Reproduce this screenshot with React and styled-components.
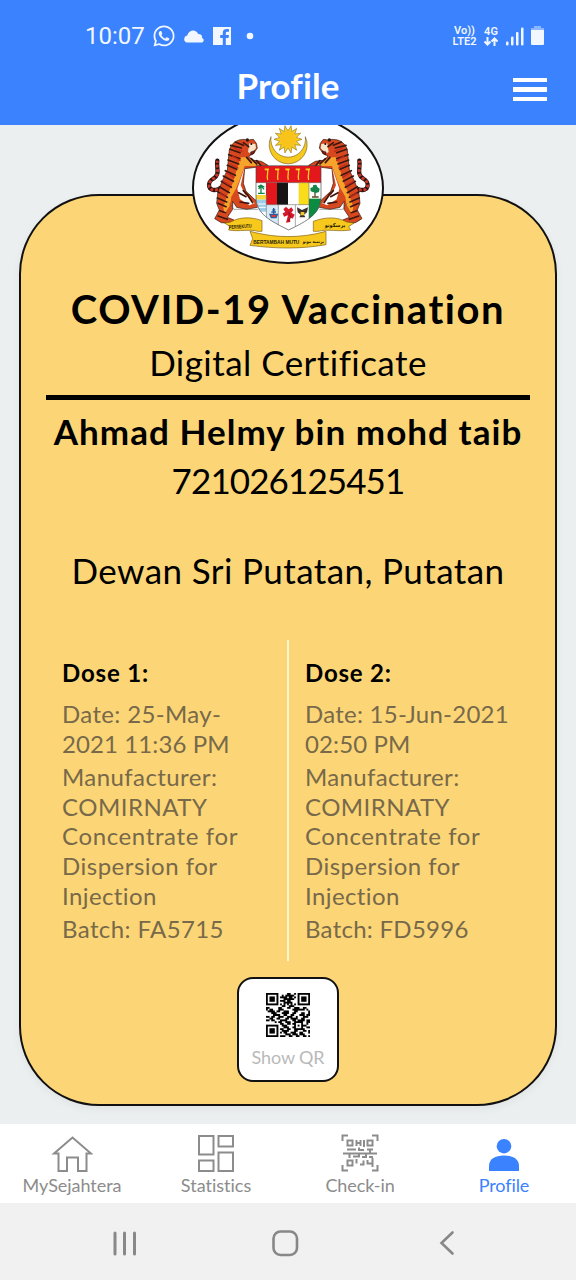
import React from "react";
import styled, { createGlobalStyle } from "styled-components";
import { FaWhatsapp } from "react-icons/fa";

const GlobalStyle = createGlobalStyle`
  * { box-sizing: border-box; }
  body { margin: 0; background: #ebefef; }
`;

const Screen = styled.div`
  width: 576px;
  height: 1280px;
  display: flex;
  flex-direction: column;
  overflow: hidden;
  background: #ebeff0;
  font-family: Lato, "Liberation Sans", sans-serif;
  font-variant-ligatures: none;
  color: #000;
`;

const Header = styled.header`
  height: 125px;
  flex: none;
  background: #3a82fe;
  color: #fff;
`;

const StatusBar = styled.div`
  height: 56px;
  padding: 16px 32px 0 85px;
  display: flex;
  align-items: center;
  justify-content: space-between;
  color: #f2f7ff;
`;

const StatusGroup = styled.div`
  display: flex;
  align-items: center;
  gap: ${(p) => p.$gap}px;
`;

const Clock = styled.span`
  font: 400 24px/40px Roboto, sans-serif;
`;

const Network = styled.span`
  display: flex;
  flex-direction: column;
  align-items: center;
  font: 600 11px/11px Roboto, sans-serif;
`;

const TitleRow = styled.div`
  height: 69px;
  padding: 0 29px 0 63px;
  display: grid;
  grid-template-columns: 1fr 34px;
  align-items: start;
`;

const PageTitle = styled.h1`
  margin: 7px 0 0;
  font-size: 35px;
  line-height: 44px;
  font-weight: 700;
  text-align: center;
  letter-spacing: 0.1px;
`;

const MenuButton = styled.button`
  margin-top: 22px;
  padding: 0;
  border: 0;
  background: none;
  width: 34px;
  display: flex;
  flex-direction: column;
  gap: 5px;
  span { height: 4.4px; background: #fff; }
`;

const Main = styled.main`
  flex: 1;
  overflow: hidden;
  padding: 69px 19px 0;
`;

const Card = styled.section`
  height: 912px;
  border: 2px solid #111;
  border-radius: 80px;
  background: #fcd676;
  display: flex;
  flex-direction: column;
  align-items: center;
  box-shadow: 0 3px 8px rgba(0, 0, 0, 0.05);
`;

const Seal = styled.div`
  flex: none;
  width: 192px;
  height: 152px;
  margin-top: -84px;
  border: 2px solid #111;
  border-radius: 50%;
  background: #fff;
  overflow: hidden;
  svg { display: block; margin: -2px; }
`;

const Line = styled.div`
  flex: none;
  white-space: nowrap;
  font-size: ${(p) => p.$size}px;
  font-weight: ${(p) => (p.$bold ? 700 : 400)};
  line-height: ${(p) => p.$height}px;
  letter-spacing: ${(p) => p.$track || 0}px;
  margin-top: ${(p) => p.$top || 0}px;
`;

const Rule = styled.hr`
  flex: none;
  width: 484px;
  height: 5px;
  margin: 11px 0 0;
  border: 0;
  background: #000;
`;

const Doses = styled.div`
  flex: none;
  width: 484px;
  height: 321px;
  margin-top: 48px;
  display: grid;
  grid-template-columns: 242px 242px;
`;

const Dose = styled.div`
  padding: 18px 0 0 16px;
  border-left: ${(p) => (p.$divided ? "2px solid #fff3d0" : "0")};
  margin-left: ${(p) => (p.$divided ? "-1px" : "0")};
  color: #77694a;
`;

const DoseTitle = styled(Line)`
  color: #000;
  margin-bottom: 11px;
`;

const QrButton = styled.button`
  flex: none;
  width: 102px;
  height: 105px;
  margin-top: 16px;
  padding: 14px 0 0;
  border: 2px solid #111;
  border-radius: 16px;
  background: #fff;
  color: #b9b9b9;
  font-family: inherit;
  display: flex;
  flex-direction: column;
  align-items: center;
`;

const TabBar = styled.nav`
  flex: none;
  height: 79px;
  background: #fff;
  display: grid;
  grid-template-columns: repeat(4, 1fr);
`;

const Tab = styled.div`
  display: flex;
  flex-direction: column;
  align-items: center;
  padding-top: 9px;
  color: ${(p) => (p.$active ? "#3a82fe" : "#8c8c8c")};
`;

const SystemNav = styled.footer`
  flex: none;
  height: 77px;
  background: #f1f1f1;
  padding: 2px 121px 0 112px;
  display: grid;
  grid-template-columns: 159px 1fr auto;
  align-items: center;
  color: #888;
`;

function Tiger() {
  return (
    <g>
      <path d="M84 208C52 218 50 186 70 176C92 162 78 146 82 122" fill="none" stroke="#25120c" strokeWidth="13" strokeLinecap="round" />
      <path d="M84 208C52 218 50 186 70 176C92 162 78 146 82 122" fill="none" stroke="#c8352a" strokeWidth="9" strokeDasharray="9 5" />
      <path d="M118 90C126 62 152 54 176 60L190 58L199 70L202 84L190 102L176 108L186 120L214 124L234 136L226 150L196 142L164 146L160 190L168 214L196 240L206 232L218 242L202 262L170 268L140 262L128 244L128 268L112 292L132 300L126 310L94 308L74 296L88 270L80 250L84 214L100 176L112 150Z" fill="#d8481f" stroke="#2a140c" strokeWidth="2" />
      <path d="M152 112L172 112L196 130L214 134L196 138L164 138L148 182L138 206L124 230L120 256L104 282L100 262L112 226L128 190L140 150Z" fill="#f6a32c" />
      <path d="M164 142L152 196L164 222L194 250L178 256L150 238L142 206Z" fill="#fff" />
      <path d="M178 70L196 72L198 84L184 102L174 96Z" fill="#f7e6cc" />
      <path d="M120 88L150 98M122 76L154 84M136 66L160 76M116 104L150 116M114 120L146 132M112 136L140 148M106 152L136 166M100 168L130 184M94 184L124 202M88 200L118 218M84 216L112 232M82 234L110 246M84 250L108 260M90 272L106 278M84 288L112 298M160 68L176 80M170 112L184 128M184 116L200 132M200 122L214 138M146 218L168 230M150 246L176 250M160 212L174 226M176 230L188 248" stroke="#3a1710" strokeWidth="5" strokeLinecap="round" />
      <path d="M132 84L156 94M128 108L150 122M120 132L144 144M110 158L132 172M100 184L120 196M90 220L108 230" stroke="#bf2a1c" strokeWidth="4" strokeLinecap="round" />
      <circle cx="184" cy="72" r="3" fill="#111" />
      <path d="M182 96L194 92L192 100L182 104Z" fill="#8c1b14" stroke="#111" strokeWidth="1.5" />
      <circle cx="172" cy="60" r="5" fill="#2a140c" />
    </g>
  );
}

function CoatOfArms() {
  const rays = Array.from({ length: 28 }, (_, i) => {
    const a = (i * Math.PI) / 14;
    const r = i % 2 ? 26 : 42;
    return `${294 + r * Math.cos(a)},${58 + r * Math.sin(a)}`;
  }).join(" ");
  return (
    <svg width="192" height="152" viewBox="6 -24 576 456">
      <path d="M243 50A57 57 0 1 0 346 50A52 54 0 1 1 243 50Z" fill="#f6c91c" stroke="#54400c" strokeWidth="1.5" />
      <polygon points={rays} fill="#f8cf20" stroke="#7b5a10" strokeWidth="1.5" />
      <circle cx="294" cy="58" r="25" fill="#f8c31b" />
      <Tiger />
      <g transform="translate(590 0) scale(-1 1)"><Tiger /></g>
      <path d="M118 250L132 268H205M472 250L458 268H388" fill="none" stroke="#555" strokeWidth="1.5" />
      <clipPath id="shield"><path d="M198 137H393V230C393 282 352 302 296 330C240 302 198 282 198 230Z" /></clipPath>
      <g clipPath="url(#shield)">
        <rect x="198" y="137" width="195" height="200" fill="#fff" />
        <rect x="198" y="137" width="195" height="51" fill="#e4181c" />
        <rect x="228" y="188" width="33" height="66" fill="#e4181c" />
        <rect x="261" y="188" width="33" height="66" fill="#161414" />
        <rect x="326" y="188" width="31" height="66" fill="#f9dc1a" />
        <rect x="198" y="225" width="31" height="14" fill="#f9d43a" />
        <rect x="198" y="239" width="31" height="36" fill="#9ccdea" />
        <path d="M198 252H229M198 262H229" stroke="#fff" strokeWidth="3" />
        <rect x="357" y="236" width="36" height="80" fill="#0c8b43" />
        <rect x="229" y="255" width="36" height="70" fill="#d7ebf6" />
        <path d="M229 188V330M357 188V330M265 254V330M316 254V330M198 188H393M229 254H357" stroke="#555" strokeWidth="1.5" />
      </g>
      <path d="M198 137H393V230C393 282 352 302 296 330C240 302 198 282 198 230Z" fill="none" stroke="#444" strokeWidth="2" />
      {[232, 263, 294, 325, 355].map((x) => (
        <g key={x} stroke="#f8cf20" fill="none">
          <path d={`M${x} 149C${x + 5} 158 ${x - 4} 166 ${x + 1} 180`} strokeWidth="4" />
          <path d={`M${x - 8} 148H${x + 5}`} strokeWidth="5" />
        </g>
      ))}
      <path d="M213 197V218M204 200L213 196L223 201M206 207L213 197L222 208M204 220H224" stroke="#14864a" strokeWidth="4" fill="none" />
      <path d="M375 210V231M366 231H386" stroke="#5d4d22" strokeWidth="4" />
      <path d="M362 214L361 204L368 202L370 195L379 194L382 201L389 206L387 216L378 219Z" fill="#14864a" />
      <path d="M240 283H262L258 293H244ZM244 276H258M247 270H256M251 264V284" stroke="#295c9e" strokeWidth="4" fill="#d53d3d" />
      <path d="M294 286L282 290L278 280L286 276L280 268L288 260L296 268L304 262L310 270L304 278L314 284L308 296L300 292L301 306L288 308Z" fill="#d6182c" />
      <path d="M296 276L302 292L294 304" stroke="#8b1020" strokeWidth="3" fill="none" />
      <path d="M336 270L321 262L323 277L332 284L328 292H346L342 284L351 277L354 262Z" fill="#39302a" />
      <path d="M332 276H343V286H332Z" fill="#f3c82c" />
      <path d="M104 309L122 306C150 290 184 290 216 302V334H204C178 326 150 336 116 330L120 320ZM492 309L470 306C442 290 408 290 370 304V334H384C414 326 442 336 482 330L476 320Z" fill="#f8c91d" stroke="#7d5d10" strokeWidth="2" />
      <path d="M180 334C254 354 330 356 408 334V374C330 388 254 386 180 376L188 356Z" fill="#f8c91d" stroke="#7d5d10" strokeWidth="2" />
      <g fill="#281c06" fontFamily="Liberation Sans, sans-serif" fontWeight="700">
        <text x="190" y="372" fontSize="16" textLength="138" lengthAdjust="spacingAndGlyphs">BERTAMBAH MUTU</text>
        <text x="117" y="325" fontSize="16" textLength="68" lengthAdjust="spacingAndGlyphs" transform="rotate(-3 150 320)">PERSEKUTU</text>
        <text x="338" y="368" fontSize="14" fontFamily="DejaVu Sans, sans-serif" textLength="64" lengthAdjust="spacingAndGlyphs" direction="ltr">برتمبه موتو</text>
        <text x="404" y="321" fontSize="16" fontFamily="DejaVu Sans, sans-serif" textLength="62" lengthAdjust="spacingAndGlyphs">برسکوتو</text>
      </g>
    </svg>
  );
}

const QR_ROWS = [
  "1111111000001100101111111",
  "1000001001011111001000001",
  "1011101011110110101011101",
  "1011101000111111001011101",
  "1011101011101100001011101",
  "1000001000111110001000001",
  "1111111010101010101111111",
  "0000000001100111000000000",
  "1100000110001100111001100",
  "1011000111000001111111010",
  "0111101100111000110000001",
  "0001110001111001100011001",
  "0000111100110011000111011",
  "1101100111001110010001110",
  "0011001100011011110011000",
  "1101100011110001101111011",
  "0000010110011100111110011",
  "0000000011001101100010010",
  "1111111001110000101011100",
  "1000001000111001100010011",
  "1011101011001100111111000",
  "1011101001111000110001101",
  "1011101010110011100110001",
  "1000001000011101110111000",
  "1111111011100110011001101",
];

function QrCode() {
  const d = QR_ROWS.flatMap((row, y) =>
    [...row].map((c, x) => (c === "1" ? `M${x} ${y}h1v1h-1z` : ""))
  ).join("");
  return (
    <svg width="44" height="44" viewBox="0 0 25 25">
      <path d={d} fill="#000" stroke="#000" strokeWidth="0.06" />
    </svg>
  );
}

const CloudIcon = () => (
  <svg width="22" height="13" viewBox="0.8 0 22 13" fill="currentColor">
    <path d="M4 12.500C0 12.500 0 6 4 5.500C6-1 13-1 15 4C19 4 19.500 7.500 18.500 8C21.500 8.500 21 12.500 18 12.500Z" />
  </svg>
);

const FacebookIcon = () => (
  <svg width="18" height="18" viewBox="0 0 18 18">
    <path d="M0 0H18V18H12.800V11H15.500L16 8H12.800V6.200C12.800 5.200 13.300 4.800 14.400 4.800H16V2.300C12.600 1.600 9.800 2.400 9.800 5.800V8H7.200V11H9.800V18H0Z" fill="currentColor" />
  </svg>
);

const DotIcon = () => (
  <svg width="20" height="8" viewBox="0 0 20 8">
    <circle cx="11" cy="4" r="3.300" fill="currentColor" />
  </svg>
);

const ArrowsIcon = () => (
  <svg width="14" height="9" viewBox="0 0 14 9" fill="none" stroke="currentColor" strokeWidth="2">
    <path d="M3.500 0V8M.5 4.500L3.500 7.500L6.500 4.500M10.500 9V1M7.500 4.500L10.500 1.500L13.500 4.500" />
  </svg>
);

const SignalIcon = () => (
  <svg width="18" height="19" viewBox="0 0 18 19" fill="currentColor">
    <rect x="0" y="14.500" width="2.500" height="4" rx="1" />
    <rect x="5" y="9.500" width="2.500" height="9" rx="1" />
    <rect x="10" y="5" width="2.500" height="13.500" rx="1" />
    <rect x="15" y="0.500" width="2.500" height="18" rx="1" />
  </svg>
);

const BatteryIcon = () => (
  <svg width="13" height="20" viewBox="0 0 13 20" fill="currentColor">
    <path d="M3 0H10V2H13V4.500H0V2H3Z" opacity=".45" />
    <path d="M0 4H13V18Q13 19 12 19H1Q0 19 0 18Z" />
  </svg>
);

const HomeIcon = () => (
  <svg width="42" height="40" viewBox="0 0 42 40" fill="none" stroke="currentColor" strokeWidth="2">
    <path d="M7.500 23.500V38H16V24.500H27V38H35.500V20.500H40L21.500 4.500L3 20.500H7.500Z" />
  </svg>
);

const StatisticsIcon = () => (
  <svg width="38" height="40" viewBox="0 0 38 40" fill="none" stroke="currentColor" strokeWidth="2">
    <path d="M2 3H16.500V21.500H2ZM21.500 3H36V13.500H21.500ZM2 27.500H16.500V38H2ZM21.500 19.500H36V38H21.500Z" />
  </svg>
);

const CheckInIcon = () => (
  <svg width="40" height="40" viewBox="0 0 40 40" fill="none" stroke="currentColor" strokeWidth="2">
    <path d="M2.500 8V2.500H8M32 2.500H37.500V8M2.500 32V37.500H8M32 37.500H37.500V32" />
    <path d="M3 20.500H37" />
    <path d="M7.500 7.500H12.500V12.500H7.500ZM27.500 7.500H32.500V12.500H27.500ZM7.500 27.500H12.500V32.500H7.500ZM16.500 7V13M16.500 10H20.500M20.500 7V13M24 7V14M7 16.500H16M19 14.500V17H24M27 16.500H33M30 17V20M9.500 21V25M13 23.500H19V20M22 24H26V20M29 24H33M16.500 26V30.500M20 31.500H23.500V27.500M27.500 27V30.500H32.500M32.500 25V34" />
  </svg>
);

const PersonIcon = () => (
  <svg width="32" height="40" viewBox="0 0 32 40" fill="currentColor">
    <circle cx="16" cy="13.200" r="7.300" />
    <path d="M1 38V33C1 26 7 22.500 16 22.500S31 26 31 33V38Z" />
  </svg>
);

const doses = [
  {
    title: "Dose 1:",
    track: 0.85,
    rows: [
      ["Date: 25-May-", 0.35],
      ["2021 11:36 PM", 0.1],
      ["Manufacturer:", 0.42, 4],
      ["COMIRNATY", 0.5],
      ["Concentrate for", 0.63],
      ["Dispersion for", 0.5],
      ["Injection", 0.4],
      ["Batch: FA5715", 0.4, 4],
    ],
  },
  {
    title: "Dose 2:",
    track: 0.8,
    rows: [
      ["Date: 15-Jun-2021", 0.25],
      ["02:50 PM", 0.1],
      ["Manufacturer:", 0.35, 4],
      ["COMIRNATY", 0.45],
      ["Concentrate for", 0.58],
      ["Dispersion for", 0.45],
      ["Injection", 0.4],
      ["Batch: FD5996", 0.27, 4],
    ],
  },
];

const tabs = [
  { label: "MySejahtera", Icon: HomeIcon, track: -0.05 },
  { label: "Statistics", Icon: StatisticsIcon, track: 0 },
  { label: "Check-in", Icon: CheckInIcon, track: -0.1 },
  { label: "Profile", Icon: PersonIcon, track: -0.1, active: true },
];

export default function App() {
  return (
    <Screen>
      <GlobalStyle />
      <Header>
        <StatusBar>
          <StatusGroup $gap={7.5}>
            <Clock>10:07</Clock>
            <FaWhatsapp size={24} />
            <CloudIcon />
            <FacebookIcon />
            <DotIcon />
          </StatusGroup>
          <StatusGroup $gap={7.5}>
            <Network><span>Vo))</span><span>LTE2</span></Network>
            <Network><span>4G</span><ArrowsIcon /></Network>
            <SignalIcon />
            <BatteryIcon />
          </StatusGroup>
        </StatusBar>
        <TitleRow>
          <PageTitle>Profile</PageTitle>
          <MenuButton aria-label="Menu"><span /><span /><span /></MenuButton>
        </TitleRow>
      </Header>
      <Main>
        <Card>
          <Seal><CoatOfArms /></Seal>
          <Line $size={40} $height={50} $top={20} $track={1.55} $bold>COVID-19 Vaccination</Line>
          <Line $size={35} $height={44} $top={6} $track={0.45}>Digital Certificate</Line>
          <Rule />
          <Line $size={35} $height={44} $top={9} $track={1.06} $bold>Ahmad Helmy bin mohd taib</Line>
          <Line $size={35} $height={44} $top={5} $track={-0.9}>721026125451</Line>
          <Line $size={35} $height={44} $top={46} $track={0.4}>Dewan Sri Putatan, Putatan</Line>
          <Doses>
            {doses.map((dose, i) => (
              <Dose key={dose.title} $divided={i === 1}>
                <DoseTitle $size={24} $height={30} $track={dose.track} $bold>{dose.title}</DoseTitle>
                {dose.rows.map(([text, track, top]) => (
                  <Line key={text} $size={24} $height={29.6} $track={track} $top={top}>{text}</Line>
                ))}
              </Dose>
            ))}
          </Doses>
          <QrButton>
            <QrCode />
            <Line $size={18} $height={22} $top={9} $track={-0.1}>Show QR</Line>
          </QrButton>
        </Card>
      </Main>
      <TabBar>
        {tabs.map(({ label, Icon, track, active }) => (
          <Tab key={label} $active={active}>
            <Icon />
            <Line $size={18} $height={22} $top={1} $track={track}>{label}</Line>
          </Tab>
        ))}
      </TabBar>
      <SystemNav>
        <svg width="26" height="28" viewBox="0 0 26 28" stroke="currentColor" strokeWidth="3" strokeLinecap="round"><path d="M3 4V25M12.500 4V25M22.500 4V25" /></svg>
        <svg width="28" height="28" viewBox="0 0 28 28" fill="none" stroke="currentColor" strokeWidth="2.600"><rect x="2.500" y="2.500" width="23.500" height="23.500" rx="7" /></svg>
        <svg width="16" height="28" viewBox="0 0 16 28" fill="none" stroke="currentColor" strokeWidth="2.600" strokeLinecap="round"><path d="M13.500 3.500L2.500 14L13.500 24.500" /></svg>
      </SystemNav>
    </Screen>
  );
}
